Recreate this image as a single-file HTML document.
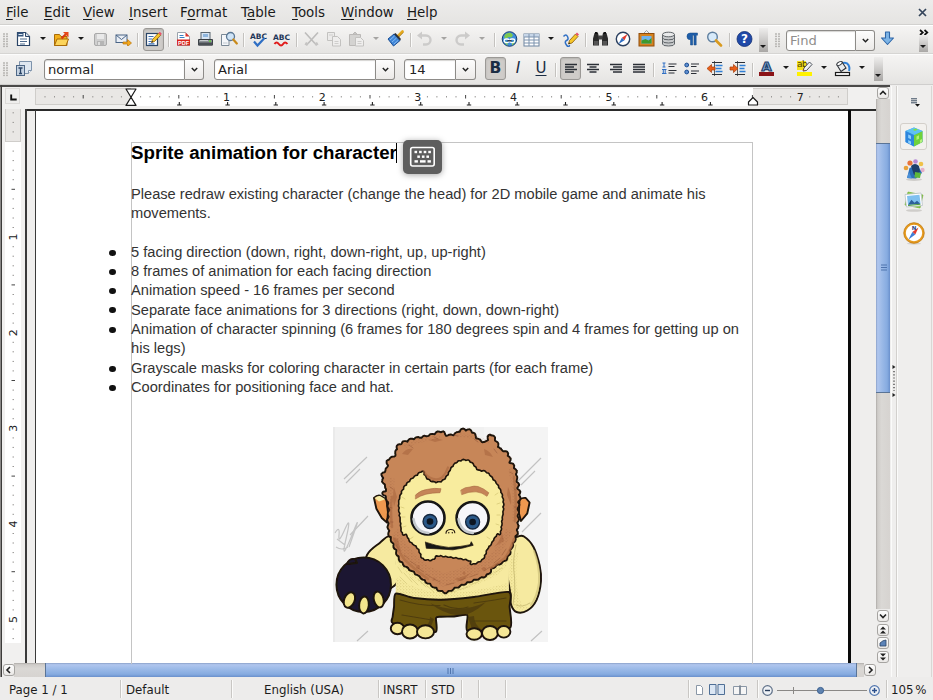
<!DOCTYPE html>
<html><head><meta charset="utf-8"><title>Writer</title>
<style>
html,body{margin:0;padding:0;}
body{width:933px;height:700px;overflow:hidden;background:#edeceb;position:relative;font-family:"DejaVu Sans","Liberation Sans",sans-serif;color:#1a1a1a;}
.abs,.i,.sep,.arr,.grip{position:absolute;}
#menubar{left:0;top:0;width:933px;height:24px;background:linear-gradient(#edeceb,#e5e4e2);border-bottom:1px solid #d2d1cf;box-shadow:0 1px 0 #fff;}
#menubar span{position:absolute;top:4px;font-size:13.4px;line-height:17px;white-space:nowrap;}
#menubar u{text-decoration:underline;text-underline-offset:2px;text-decoration-thickness:1px;}
.doc{font-family:"Liberation Sans",sans-serif;color:#000;}
.line{position:absolute;left:131px;white-space:nowrap;font-size:14.65px;line-height:19px;color:#333;}
.bul{position:absolute;left:109px;width:6.5px;height:6px;border-radius:50%;background:#111;}
.tb{left:0;width:933px;background:linear-gradient(#f5f4f3,#e5e4e2);}
.sep{width:1px;height:14px;background:#c4c2bf;box-shadow:1px 0 0 #fbfbfa;}
.arr{width:0;height:0;border-left:3px solid transparent;border-right:3px solid transparent;border-top:3.500px solid #1a1a1a;}
.arr.g{border-top-color:#a5a4a2;}
.grip{width:6px;height:15px;background-image:radial-gradient(circle at 1px 1px,#b3b1ae 0.6px,transparent 1.1px);background-size:3px 2.5px;}
.combo{position:absolute;height:19px;background:#fff;border:1px solid #8d8b88;border-radius:3px 0 0 3px;box-shadow:inset 0 1px 1px #d5d4d2;font-size:13.1px;color:#222;line-height:19px;padding-left:3px;box-sizing:content-box;}
.cbtn{position:absolute;height:19px;width:19px;border:1px solid #8d8b88;border-left:none;border-radius:0 3px 3px 0;background:linear-gradient(#fdfdfd,#eceae8);}
.cbtn svg{position:absolute;left:5px;top:6px;}
.pressed{position:absolute;background:#cfccc9;border:1px solid #9b9996;border-radius:3px;box-shadow:inset 0 1px 2px #b5b3b0;}
.ovf{position:absolute;background:linear-gradient(#eeedec,#a9a7a5);}
.sbtn{position:absolute;width:11px;height:11px;border:1px solid #a6a4a1;border-radius:3px;background:linear-gradient(#fdfdfd,#eae8e6);box-sizing:border-box;}
.sbtn svg{position:absolute;left:0;top:0;}
.st{position:absolute;top:4px;font-size:11.8px;line-height:17px;white-space:nowrap;color:#1c1c1c;}
.ssep{position:absolute;top:2px;width:1px;height:18px;background:#c9c7c4;box-shadow:1px 0 0 #fbfbfa;}
</style></head><body>
<!-- MENU -->
<div id="menubar" class="abs">
<span style="left:6px"><u>F</u>ile</span>
<span style="left:44px"><u>E</u>dit</span>
<span style="left:83px"><u>V</u>iew</span>
<span style="left:129px"><u>I</u>nsert</span>
<span style="left:180px">F<u>o</u>rmat</span>
<span style="left:241px">T<u>a</u>ble</span>
<span style="left:292px"><u>T</u>ools</span>
<span style="left:341px"><u>W</u>indow</span>
<span style="left:407px"><u>H</u>elp</span>
<svg class="abs" style="left:917px;top:7px" width="11" height="11" viewBox="0 0 11 11"><path d="M2 2 L9 9 M9 2 L2 9" stroke="#34445a" stroke-width="1.7" fill="none"/></svg>
</div>
<!-- TOOLBAR 1 -->
<div id="tb1" class="abs tb" style="top:26px;height:27px;border-bottom:1px solid #d6d5d3;box-shadow:0 1px 0 #fcfcfc;">
<div class="grip" style="left:3px;top:7px"></div>
<!-- new -->
<svg class="i" style="left:16px;top:5px" width="15" height="16" viewBox="0 0 15 16"><path d="M1.5 1.5h8l4 4v9h-12z" fill="#fff" stroke="#2b4567" stroke-width="1.2"/><path d="M1.5 1.5h6v4h-6z" fill="#35557d"/><path d="M9.5 1.5v4h4" fill="#d8e2ee" stroke="#2b4567" stroke-width="1"/><path d="M4 8h7M4 10.5h7M4 13h5" stroke="#4d6a8c" stroke-width="1.2"/><path d="M2.5 3.5h4" stroke="#dfe8f2" stroke-width="1"/></svg>
<div class="arr" style="left:40px;top:11px"></div>
<!-- open -->
<svg class="i" style="left:53px;top:5px" width="17" height="16" viewBox="0 0 17 16"><path d="M1.5 3.5h5l1.5 2h6v9h-12.500z" fill="#f3b01b" stroke="#a96b07" stroke-width="1"/><path d="M1.5 14.500l2.500-6.500h11.500l-2.500 6.500z" fill="#fcd45a" stroke="#a96b07" stroke-width="1"/><path d="M8.500 7.500l5-5" stroke="#d83a10" stroke-width="2.200"/><path d="M10 1h5.500v5.500z" fill="#e8481a"/></svg>
<div class="arr" style="left:78px;top:11px"></div>
<!-- save disabled -->
<svg class="i" style="left:93px;top:6px" width="15" height="15" viewBox="0 0 15 15"><rect x="1.500" y="1.500" width="12" height="12" rx="1.500" fill="#cfcfcf" stroke="#a9a9a9"/><rect x="4" y="2" width="7" height="5" fill="#e9e9e9"/><rect x="4" y="9" width="7" height="4.500" fill="#b5b5b5"/><rect x="5" y="10" width="2" height="3" fill="#dedede"/></svg>
<!-- mail -->
<svg class="i" style="left:115px;top:8px" width="17" height="12" viewBox="0 0 17 12"><rect x="1" y="1" width="11" height="7.500" fill="#e9eef5" stroke="#4a6486" stroke-width="1"/><path d="M1 1l5.500 4.500 5.500-4.500" fill="none" stroke="#4a6486" stroke-width="1"/><path d="M8 8h4.500v-2.500l4 3.500-4 3.500v-2.500h-4.500z" fill="#f5a81c" stroke="#b8720a" stroke-width=".7"/></svg>
<div class="sep" style="left:137px;top:7px"></div>
<!-- edit mode pressed -->
<div class="pressed" style="left:143px;top:2px;width:19px;height:21px;"></div>
<svg class="i" style="left:145px;top:5px" width="17" height="16" viewBox="0 0 17 16"><rect x="1.500" y="2.500" width="11" height="12" fill="#fff" stroke="#2b4567" stroke-width="1.200"/><path d="M3.500 5.500h5M3.500 8h4M3.500 10.500h3M3.500 12.800h6" stroke="#3a6fb5" stroke-width="1.200"/><path d="M6.500 11.500l1-3 6-6.500 2.200 2.200-6.200 6.300z" fill="#f6c62a" stroke="#8a5a0a" stroke-width=".8"/><path d="M13.500 2l1.300-1.200 2 2-1.100 1.400z" fill="#e9506a"/><path d="M6.500 11.500l.5-1.700 1.200 1.200z" fill="#222"/></svg>
<div class="sep" style="left:168px;top:7px"></div>
<!-- pdf -->
<svg class="i" style="left:176px;top:5px" width="15" height="16" viewBox="0 0 15 16"><path d="M1.500 1.500h8l4 4v9h-12z" fill="#fff" stroke="#9aa3ad" stroke-width="1"/><path d="M9.500 1.500v4h4z" fill="#e3332a"/><path d="M3.500 4.500h4M3.500 6.500h5" stroke="#3a7fc5" stroke-width="1.200"/><rect x="1" y="8.500" width="13" height="6" fill="#d9231c"/><text x="7.500" y="13.600" font-family="Liberation Sans,sans-serif" font-weight="bold" font-size="5.500" fill="#fff" text-anchor="middle">PDF</text></svg>
<!-- printer -->
<svg class="i" style="left:197px;top:5px" width="17" height="16" viewBox="0 0 17 16"><rect x="4" y="1.500" width="9" height="7" fill="#d7e5f4" stroke="#5b6770" stroke-width="1"/><rect x="6" y="3" width="5" height="3" fill="#8fb6de"/><path d="M1.500 8.500h14v5.500h-14z" fill="#8c9196" stroke="#3a3f44" stroke-width="1"/><rect x="1.500" y="11.500" width="14" height="3" fill="#4a4f54"/><rect x="12" y="9.500" width="2" height="1.500" fill="#5fd33a"/><path d="M3 9.500h8" stroke="#c7cbce" stroke-width="1"/></svg>
<!-- preview -->
<svg class="i" style="left:220px;top:5px" width="18" height="16" viewBox="0 0 18 16"><path d="M1.500 3.500h7.500v11h-7.500z" fill="#f4f6f9" stroke="#7a8896" stroke-width="1"/><path d="M3 12h4.500" stroke="#c0c8d0"/><circle cx="10.500" cy="5.500" r="4" fill="#cfe4f7" stroke="#5b7794" stroke-width="1.300"/><path d="M13.300 8.500l3.500 4" stroke="#c98a1a" stroke-width="2.200" stroke-linecap="round"/></svg>
<div class="sep" style="left:243px;top:7px"></div>
<!-- spellcheck -->
<svg class="i" style="left:249px;top:5px" width="19" height="17" viewBox="0 0 19 17"><text x="9.500" y="7.500" font-family="DejaVu Sans,sans-serif" font-weight="bold" font-size="7.500" fill="#1d3557" text-anchor="middle">ABC</text><path d="M5 10.500l3.500 4 7-7.500" fill="none" stroke="#2f6fc4" stroke-width="2.200"/></svg>
<!-- autospell -->
<svg class="i" style="left:272px;top:6px" width="19" height="16" viewBox="0 0 19 16"><text x="9.500" y="8" font-family="DejaVu Sans,sans-serif" font-weight="bold" font-size="7.500" fill="#1d3557" text-anchor="middle">ABC</text><path d="M2.500 12q2-3 4.300 0t4.300 0 4.300 0" fill="none" stroke="#e01b1b" stroke-width="2"/></svg>
<div class="sep" style="left:296px;top:7px"></div>
<!-- cut disabled -->
<svg class="i" style="left:303px;top:5px" width="17" height="16" viewBox="0 0 17 16"><path d="M2 1.500l10 11M15 1.500l-10 11" stroke="#bdbcbb" stroke-width="1.600" fill="none"/><path d="M3 11l3 1.500-2 2.500-2.500-1.500zM14 11l-3 1.500 2 2.500 2.500-1.500z" fill="#c4c3c2"/></svg>
<!-- copy disabled -->
<svg class="i" style="left:326px;top:5px" width="16" height="16" viewBox="0 0 16 16"><path d="M1.500 1.500h7v8h-7z" fill="#eceBea" stroke="#c3c2c0"/><path d="M6.500 5.500h5l3 3v6.500h-8z" fill="#efeeed" stroke="#c3c2c0"/><path d="M8.500 10.500h4M8.500 12.500h4M3 4h4" stroke="#cfcecc"/></svg>
<!-- paste disabled -->
<svg class="i" style="left:348px;top:5px" width="17" height="16" viewBox="0 0 17 16"><path d="M1.500 3.500h11v11h-11z" fill="#d4d3d1" stroke="#bbb9b7"/><path d="M4.500 3.500l2.500-2.500 2.500 2.500z" fill="#c6c5c3" stroke="#bbb9b7"/><path d="M7.500 6.500h5l3 3v5.500h-8z" fill="#efeeed" stroke="#c3c2c0"/><path d="M9.500 10.500h4M9.500 12.500h4" stroke="#cfcecc"/></svg>
<div class="arr g" style="left:373px;top:11px"></div>
<!-- paintbrush -->
<svg class="i" style="left:386px;top:4px" width="18" height="18" viewBox="0 0 18 18"><path d="M11.500 6.500l5-5" stroke="#e4a91f" stroke-width="2.600" stroke-linecap="round"/><path d="M11.500 6.500l5-5" stroke="#8a5c08" stroke-width=".6" transform="translate(.9 .9)"/><path d="M2 9l6-5 6 6.500-6.500 5.500z" fill="#3f86d8" stroke="#1c4f94" stroke-width="1"/><path d="M8 4l1.500-1 5.500 6-1 1.500z" fill="#2a2f38"/><path d="M4 10l4.500-4M6 12l4.500-4M8 14l4-3.500" stroke="#8fc0f2" stroke-width=".9"/></svg>
<div class="sep" style="left:410px;top:7px"></div>
<!-- undo disabled -->
<svg class="i" style="left:416px;top:5px" width="17" height="16" viewBox="0 0 17 16"><path d="M5 4.500h5a4.500 4.500 0 0 1 0 9h-3" fill="none" stroke="#cccbca" stroke-width="2.400"/><path d="M1 4.500l5-4v8z" fill="#cccbca"/></svg>
<div class="arr g" style="left:441px;top:11px"></div>
<!-- redo disabled -->
<svg class="i" style="left:454px;top:5px" width="17" height="16" viewBox="0 0 17 16"><path d="M12 4.500h-5a4.500 4.500 0 0 0 0 9h3" fill="none" stroke="#cccbca" stroke-width="2.400"/><path d="M16 4.500l-5-4v8z" fill="#cccbca"/></svg>
<div class="arr g" style="left:479px;top:11px"></div>
<div class="sep" style="left:494px;top:7px"></div>
<!-- hyperlink -->
<svg class="i" style="left:501px;top:5px" width="17" height="16" viewBox="0 0 17 16"><circle cx="8.500" cy="8" r="7.300" fill="#3f8edb" stroke="#1b3f73" stroke-width="1"/><path d="M4 3.500q3-2.500 6-1.500l2 2-1.500 2.500-3-.5-2 1.500-2.500-1z" fill="#7ec850"/><path d="M3 10l3 1 1 3.500q-3-1-4-4.500zM11 11l3.500-1.500q-.5 3-3.500 5z" fill="#7ec850"/><rect x="3.200" y="8" width="5" height="3.600" rx="1.800" fill="none" stroke="#fff" stroke-width="1.300"/><rect x="8.800" y="8" width="5" height="3.600" rx="1.800" fill="none" stroke="#fff" stroke-width="1.300"/><path d="M6.500 9.800h4" stroke="#222" stroke-width="1.300"/></svg>
<!-- table -->
<svg class="i" style="left:523px;top:7px" width="17" height="14" viewBox="0 0 17 14"><rect x="1" y="1" width="15" height="12" fill="#fff" stroke="#6d84a0" stroke-width="1"/><rect x="1" y="1" width="15" height="3" fill="#c7d6e8"/><path d="M1 4h15M1 7h15M1 10h15M6 1v12M11 1v12" stroke="#7d93ae" stroke-width="1"/></svg>
<div class="arr" style="left:548px;top:11px"></div>
<!-- draw -->
<svg class="i" style="left:562px;top:5px" width="17" height="16" viewBox="0 0 17 16"><path d="M1.500 5.500q2.500-3 4 0t-1 4 0 4.500 3 0" fill="none" stroke="#2f6fc4" stroke-width="1.500"/><path d="M6.500 13l1-3.500 6-6.500 2.500 2.500-6 6.500z" fill="#f6c62a" stroke="#8a5a0a" stroke-width=".8"/><path d="M13.500 3l1.500-1.500 2 2-1.300 1.600z" fill="#e9506a"/><path d="M6.500 13l.5-1.800 1.300 1.300z" fill="#222"/></svg>
<div class="sep" style="left:585px;top:7px"></div>
<!-- binoculars -->
<svg class="i" style="left:592px;top:5px" width="17" height="16" viewBox="0 0 17 16"><path d="M2.500 2h3.500l1 4v8.500h-6v-7z" fill="#2b2b2b"/><path d="M14.500 2h-3.500l-1 4v8.500h6v-7z" fill="#2b2b2b"/><rect x="6.500" y="4.500" width="4" height="4" fill="#444"/><rect x="2" y="10" width="4.500" height="4" fill="#555"/><rect x="10.500" y="10" width="4.500" height="4" fill="#555"/><rect x="3" y="1" width="2.500" height="2" fill="#111"/><rect x="11.500" y="1" width="2.500" height="2" fill="#111"/></svg>
<!-- navigator -->
<svg class="i" style="left:615px;top:5px" width="16" height="16" viewBox="0 0 16 16"><circle cx="8" cy="8" r="6.700" fill="#fff" stroke="#2a3f5f" stroke-width="1.400"/><path d="M12.500 3l-3 6.200-2.600-2.400z" fill="#e23b2e"/><path d="M3.500 13l3.400-6.200 2.600 2.400z" fill="#2f6fc4"/></svg>
<!-- gallery -->
<svg class="i" style="left:638px;top:4px" width="17" height="17" viewBox="0 0 17 17"><path d="M6 3l2.500-2.500 2.500 2.500" fill="none" stroke="#8a8a8a" stroke-width=".8"/><rect x="1" y="3.500" width="15" height="12.500" fill="#d5821e" stroke="#8f4d0c" stroke-width="1"/><rect x="3.500" y="6" width="10" height="7.500" fill="#6fb3ec"/><path d="M3.500 13.500v-3l4-1.500 3 1.500 3-2.500v5.500z" fill="#3d9a2e"/></svg>
<!-- database -->
<svg class="i" style="left:661px;top:5px" width="15" height="16" viewBox="0 0 15 16"><path d="M1.500 3.500v9.500q0 2 6 2t6-2v-9.500" fill="#c9cbcd" stroke="#5f6468" stroke-width="1"/><ellipse cx="7.500" cy="3.500" rx="6" ry="2.300" fill="#e9eaeb" stroke="#5f6468"/><path d="M1.500 6.800q0 2 6 2t6-2M1.500 10q0 2 6 2t6-2" fill="none" stroke="#5f6468"/></svg>
<!-- pilcrow -->
<svg class="i" style="left:685px;top:6px" width="14" height="14" viewBox="0 0 14 14"><path d="M5.200 1h7.300v2.200h-1.300v9.800h-2.200v-9.800h-1.300v9.800h-2.200v-5.200a3.400 3.400 0 0 1-0.300-6.800z" fill="#1f5ea9" stroke="#174a86" stroke-width=".5"/></svg>
<!-- zoom -->
<svg class="i" style="left:706px;top:5px" width="17" height="16" viewBox="0 0 17 16"><circle cx="6.500" cy="6" r="4.800" fill="#d7eafa" stroke="#5f7f9f" stroke-width="1.400"/><path d="M10 9.500l5 5" stroke="#d99a1f" stroke-width="2.600" stroke-linecap="round"/></svg>
<div class="sep" style="left:729px;top:7px"></div>
<!-- help -->
<svg class="i" style="left:736px;top:5px" width="17" height="16" viewBox="0 0 17 16"><circle cx="8.500" cy="8" r="7.500" fill="#1f49a8" stroke="#132f73" stroke-width=".8"/><text x="8.500" y="12.300" font-family="DejaVu Sans,sans-serif" font-weight="bold" font-size="12" fill="#fff" text-anchor="middle">?</text></svg>
<div class="ovf" style="left:759px;top:2px;width:9px;height:24px;"></div>
<div class="arr" style="left:760px;top:19px;border-width:3.500px 3px 0 3px"></div>
<!-- find toolbar -->
<div class="grip" style="left:775px;top:7px"></div>
<div class="combo" style="left:786px;top:4px;width:65px;color:#8f8e8c;">Find</div>
<div class="cbtn" style="left:856px;top:4px;width:18px;"><svg width="9" height="7" viewBox="0 0 9 7"><path d="M1.800 2l2.700 2.700 2.700-2.700" fill="none" stroke="#222" stroke-width="1.500"/></svg></div>
<svg class="i" style="left:880px;top:5px" width="15" height="15" viewBox="0 0 15 15"><path d="M5.500 1h4v6h4l-6 6.500-6-6.500h4z" fill="#7db4e6" stroke="#2f67a8" stroke-width="1.100" stroke-linejoin="round"/></svg>
<svg class="i" style="left:919px;top:3px" width="10" height="7" viewBox="0 0 10 7"><path d="M1 1l2.800 2.500-2.800 2.500M5.500 1l2.800 2.500-2.800 2.500" fill="none" stroke="#111" stroke-width="1.700"/></svg>
<div class="ovf" style="left:919px;top:9px;width:9px;height:17px;"></div>
<div class="arr" style="left:920px;top:19px;border-width:3.500px 3px 0 3px"></div>
</div>
<!-- TOOLBAR 2 -->
<div id="tb2" class="abs tb" style="top:55px;height:29px;border-bottom:1px solid #cfcecd;">
<div class="grip" style="left:3px;top:7px"></div>
<!-- styles -->
<svg class="i" style="left:15px;top:5px" width="18" height="17" viewBox="0 0 18 17"><path d="M4.500 1.500h12v9l-3 3h-9z" fill="#dfe7f0" stroke="#7e93ab" stroke-width="1"/><path d="M16.500 10.500h-3v3" fill="#fff" stroke="#7e93ab"/><rect x="1.500" y="5.500" width="8" height="10" fill="#c6d3e2" stroke="#4e6786" stroke-width="1"/><path d="M3.500 8h4M5.500 8v5.500M4 13.500h3" stroke="#2b4567" stroke-width="1.300"/></svg>
<div class="combo" style="left:44px;top:4px;width:136px;">normal</div>
<div class="cbtn" style="left:185px;top:4px;width:18px;"><svg width="9" height="7" viewBox="0 0 9 7"><path d="M1.800 2l2.700 2.700 2.700-2.700" fill="none" stroke="#222" stroke-width="1.500"/></svg></div>
<div class="combo" style="left:214px;top:4px;width:157px;">Arial</div>
<div class="cbtn" style="left:376px;top:4px;width:18px;"><svg width="9" height="7" viewBox="0 0 9 7"><path d="M1.800 2l2.700 2.700 2.700-2.700" fill="none" stroke="#222" stroke-width="1.500"/></svg></div>
<div class="combo" style="left:404px;top:4px;width:46px;padding-left:4px;">14</div>
<div class="cbtn" style="left:456px;top:4px;"><svg width="9" height="7" viewBox="0 0 9 7"><path d="M1.800 2l2.700 2.700 2.700-2.700" fill="none" stroke="#222" stroke-width="1.500"/></svg></div>
<!-- B I U -->
<div class="pressed" style="left:485px;top:2px;width:19px;height:21px;"></div>
<div class="abs" style="left:485px;top:3px;width:21px;text-align:center;font:bold 15.500px/20px 'DejaVu Sans',sans-serif;color:#1b2d44;">B</div>
<div class="abs" style="left:509px;top:3px;width:18px;text-align:center;font:italic 15.500px/20px 'DejaVu Sans',sans-serif;color:#1b2d44;">I</div>
<div class="abs" style="left:532px;top:3px;width:18px;text-align:center;font:15px/20px 'DejaVu Sans',sans-serif;color:#1b2d44;text-decoration:underline;text-underline-offset:2px;">U</div>
<div class="sep" style="left:555px;top:8px"></div>
<div class="pressed" style="left:560px;top:2px;width:19px;height:21px;"></div>
<svg class="i" style="left:565px;top:8px" width="12" height="11" viewBox="0 0 12 11"><path d="M0 1.500h12M0 4h9M0 6.500h12M0 9h9" stroke="#2b2f36" stroke-width="1.500"/></svg>
<svg class="i" style="left:587px;top:8px" width="12" height="11" viewBox="0 0 12 11"><path d="M0 1.500h12M2.500 4h7M0 6.500h12M2.500 9h7" stroke="#2b2f36" stroke-width="1.500"/></svg>
<svg class="i" style="left:610px;top:8px" width="12" height="11" viewBox="0 0 12 11"><path d="M0 1.500h12M3 4h9M0 6.500h12M3 9h9" stroke="#2b2f36" stroke-width="1.500"/></svg>
<svg class="i" style="left:633px;top:8px" width="12" height="11" viewBox="0 0 12 11"><path d="M0 1.500h12M0 4h12M0 6.500h12M0 9h12" stroke="#2b2f36" stroke-width="1.500"/></svg>
<div class="sep" style="left:653px;top:8px"></div>
<!-- numbering -->
<svg class="i" style="left:661px;top:7px" width="16" height="13" viewBox="0 0 16 13"><path d="M1.500 1h3M3 1v4M1.500 5h3M1 7.500h4.500M2.300 7.500v4M4.200 7.500v4M1 11.500h4.500" stroke="#2f6fc4" stroke-width="1"/><path d="M7.500 2h8M7.500 4.500h6M7.500 8.500h8M7.500 11h6" stroke="#2b2f36" stroke-width="1.200"/></svg>
<!-- bullets -->
<svg class="i" style="left:684px;top:7px" width="15" height="13" viewBox="0 0 15 13"><circle cx="2.700" cy="3" r="1.900" fill="#5f8fd0" stroke="#1d4f94" stroke-width="1"/><circle cx="2.700" cy="10" r="1.900" fill="#5f8fd0" stroke="#1d4f94" stroke-width="1"/><path d="M7 2h8M7 4.500h5.500M7 9h8M7 11.500h5.500" stroke="#2b2f36" stroke-width="1.200"/></svg>
<!-- outdent -->
<svg class="i" style="left:706px;top:5px" width="17" height="17" viewBox="0 0 17 17"><path d="M8.500 1v15" stroke="#3a3a3a" stroke-width=".8"/><path d="M6 2.500h10M6 14.500h10" stroke="#2b2f36" stroke-width="1"/><path d="M9.500 5.500h7M9.500 8.500h6M9.500 11.500h7" stroke="#2f7fd6" stroke-width="1.500"/><path d="M1 8.500l4.500-4v2.500h3.500v3h-3.500v2.500z" fill="#e9601a" stroke="#a83c08" stroke-width=".7"/></svg>
<!-- indent -->
<svg class="i" style="left:729px;top:5px" width="17" height="17" viewBox="0 0 17 17"><path d="M8.500 1v15" stroke="#3a3a3a" stroke-width=".8"/><path d="M6 2.500h10M6 14.500h10" stroke="#2b2f36" stroke-width="1"/><path d="M10.500 5.500h6M10.500 8.500h5M10.500 11.500h6" stroke="#2f7fd6" stroke-width="1.500"/><path d="M9 8.500l-4.500-4v2.500h-3.500v3h3.500v2.500z" fill="#e9601a" stroke="#a83c08" stroke-width=".7"/></svg>
<div class="sep" style="left:752px;top:8px"></div>
<!-- font color -->
<div class="abs" style="left:758px;top:4px;width:17px;text-align:center;font:bold 13px/15px 'DejaVu Sans',sans-serif;color:#8fb0d6;-webkit-text-stroke:1.200px #1f4470;">A</div>
<div class="abs" style="left:759px;top:17px;width:15px;height:4px;background:#8b1418;"></div>
<div class="arr" style="left:783px;top:11px"></div>
<!-- highlight -->
<div class="abs" style="left:797px;top:6px;width:9px;height:9px;background:#f2e11c;"></div>
<div class="abs" style="left:797px;top:17px;width:15px;height:4px;background:#fff200;"></div>
<div class="abs" style="left:797px;top:4px;font:9px/11px 'DejaVu Sans',sans-serif;color:#4a3b00;letter-spacing:-.5px;">ab</div>
<svg class="i" style="left:801px;top:5px" width="12" height="12" viewBox="0 0 12 12"><path d="M2 11l1-3 5.500-6 2.500 2.500-5.500 6z" fill="#eef0f2" stroke="#3a3f48" stroke-width=".9"/><path d="M2 11l.6-1.800 1.300 1.300z" fill="#d8421a"/></svg>
<div class="arr" style="left:821px;top:11px"></div>
<!-- background bucket -->
<svg class="i" style="left:834px;top:5px" width="17" height="17" viewBox="0 0 17 17"><path d="M9 3q4-1 5.500 2t.5 6" fill="none" stroke="#2f7fd6" stroke-width="2"/><path d="M3 5l5-3 4 6-5 3.500z" fill="#e9ecef" stroke="#2b2f36" stroke-width="1.100"/><ellipse cx="5.500" cy="3.500" rx="3" ry="1.500" transform="rotate(-30 5.500 3.500)" fill="#fff" stroke="#2b2f36" stroke-width=".9"/><rect x="1.500" y="12.500" width="14" height="3" fill="#fff" stroke="#1a1a1a" stroke-width="1.200"/></svg>
<div class="arr" style="left:859px;top:11px"></div>
<div class="ovf" style="left:874px;top:2px;width:9px;height:24px;"></div>
<div class="arr" style="left:875px;top:19px;border-width:3.500px 3px 0 3px"></div>
</div>
<!-- FRAME -->
<div class="abs" style="left:0;top:85px;width:891px;height:2px;background:#4a4948;"></div>
<div class="abs" style="left:1px;top:85px;width:1px;height:592px;background:#3c3b3a;"></div>
<div class="abs" style="left:0px;top:87px;width:1px;height:590px;background:#8a8886;"></div>
<div id="hruler" class="abs" style="left:2px;top:87px;width:875px;height:22px;background:#f1f0ef;overflow:hidden;">
<div class="abs" style="left:3px;top:1px;width:15px;height:16px;background:#efeeed;border:1px solid #dcdad8;box-sizing:border-box;"></div>
<svg class="abs" style="left:8px;top:7px" width="8" height="8" viewBox="0 0 8 8"><path d="M1.200 0.500v5h5.500" fill="none" stroke="#111" stroke-width="1.900"/></svg>
<div class="abs" style="left:129px;top:1px;width:622px;height:18px;background:#ffffff;"></div>
<div class="abs" style="left:33px;top:1px;width:96px;height:17px;background:#e9e7e5;border:1px solid #cfcdca;border-right:none;box-sizing:border-box;"></div>
<div class="abs" style="left:751px;top:1px;width:95px;height:17px;background:#e9e7e5;border:1px solid #cfcdca;border-left:none;box-sizing:border-box;"></div>
<svg class="abs" style="left:0;top:0" width="875" height="22" viewBox="0 0 875 22"><rect x="42.5" y="9" width="1" height="1.500" fill="#9a9896"/><rect x="52.0" y="9" width="1" height="1.500" fill="#9a9896"/><rect x="61.6" y="9" width="1" height="1.500" fill="#9a9896"/><rect x="71.1" y="9" width="1" height="1.500" fill="#9a9896"/><rect x="80.7" y="8" width="1" height="3.500" fill="#444"/><rect x="90.3" y="9" width="1" height="1.500" fill="#9a9896"/><rect x="99.8" y="9" width="1" height="1.500" fill="#9a9896"/><rect x="109.4" y="9" width="1" height="1.500" fill="#9a9896"/><rect x="118.9" y="9" width="1" height="1.500" fill="#9a9896"/><rect x="138.1" y="9" width="1" height="1.500" fill="#9a9896"/><rect x="147.6" y="9" width="1" height="1.500" fill="#9a9896"/><rect x="157.2" y="9" width="1" height="1.500" fill="#9a9896"/><rect x="166.7" y="9" width="1" height="1.500" fill="#9a9896"/><rect x="176.3" y="8" width="1" height="3.500" fill="#444"/><rect x="185.9" y="9" width="1" height="1.500" fill="#9a9896"/><rect x="195.4" y="9" width="1" height="1.500" fill="#9a9896"/><rect x="205.0" y="9" width="1" height="1.500" fill="#9a9896"/><rect x="214.5" y="9" width="1" height="1.500" fill="#9a9896"/><rect x="233.7" y="9" width="1" height="1.500" fill="#9a9896"/><rect x="243.2" y="9" width="1" height="1.500" fill="#9a9896"/><rect x="252.8" y="9" width="1" height="1.500" fill="#9a9896"/><rect x="262.3" y="9" width="1" height="1.500" fill="#9a9896"/><rect x="271.9" y="8" width="1" height="3.500" fill="#444"/><rect x="281.5" y="9" width="1" height="1.500" fill="#9a9896"/><rect x="291.0" y="9" width="1" height="1.500" fill="#9a9896"/><rect x="300.6" y="9" width="1" height="1.500" fill="#9a9896"/><rect x="310.1" y="9" width="1" height="1.500" fill="#9a9896"/><rect x="329.3" y="9" width="1" height="1.500" fill="#9a9896"/><rect x="338.8" y="9" width="1" height="1.500" fill="#9a9896"/><rect x="348.4" y="9" width="1" height="1.500" fill="#9a9896"/><rect x="357.9" y="9" width="1" height="1.500" fill="#9a9896"/><rect x="367.5" y="8" width="1" height="3.500" fill="#444"/><rect x="377.1" y="9" width="1" height="1.500" fill="#9a9896"/><rect x="386.6" y="9" width="1" height="1.500" fill="#9a9896"/><rect x="396.2" y="9" width="1" height="1.500" fill="#9a9896"/><rect x="405.7" y="9" width="1" height="1.500" fill="#9a9896"/><rect x="424.9" y="9" width="1" height="1.500" fill="#9a9896"/><rect x="434.4" y="9" width="1" height="1.500" fill="#9a9896"/><rect x="444.0" y="9" width="1" height="1.500" fill="#9a9896"/><rect x="453.5" y="9" width="1" height="1.500" fill="#9a9896"/><rect x="463.1" y="8" width="1" height="3.500" fill="#444"/><rect x="472.7" y="9" width="1" height="1.500" fill="#9a9896"/><rect x="482.2" y="9" width="1" height="1.500" fill="#9a9896"/><rect x="491.8" y="9" width="1" height="1.500" fill="#9a9896"/><rect x="501.3" y="9" width="1" height="1.500" fill="#9a9896"/><rect x="520.5" y="9" width="1" height="1.500" fill="#9a9896"/><rect x="530.0" y="9" width="1" height="1.500" fill="#9a9896"/><rect x="539.6" y="9" width="1" height="1.500" fill="#9a9896"/><rect x="549.1" y="9" width="1" height="1.500" fill="#9a9896"/><rect x="558.7" y="8" width="1" height="3.500" fill="#444"/><rect x="568.3" y="9" width="1" height="1.500" fill="#9a9896"/><rect x="577.8" y="9" width="1" height="1.500" fill="#9a9896"/><rect x="587.4" y="9" width="1" height="1.500" fill="#9a9896"/><rect x="596.9" y="9" width="1" height="1.500" fill="#9a9896"/><rect x="616.1" y="9" width="1" height="1.500" fill="#9a9896"/><rect x="625.6" y="9" width="1" height="1.500" fill="#9a9896"/><rect x="635.2" y="9" width="1" height="1.500" fill="#9a9896"/><rect x="644.7" y="9" width="1" height="1.500" fill="#9a9896"/><rect x="654.3" y="8" width="1" height="3.500" fill="#444"/><rect x="663.9" y="9" width="1" height="1.500" fill="#9a9896"/><rect x="673.4" y="9" width="1" height="1.500" fill="#9a9896"/><rect x="683.0" y="9" width="1" height="1.500" fill="#9a9896"/><rect x="692.5" y="9" width="1" height="1.500" fill="#9a9896"/><rect x="711.7" y="9" width="1" height="1.500" fill="#9a9896"/><rect x="721.2" y="9" width="1" height="1.500" fill="#9a9896"/><rect x="730.8" y="9" width="1" height="1.500" fill="#9a9896"/><rect x="740.3" y="9" width="1" height="1.500" fill="#9a9896"/><rect x="749.9" y="8" width="1" height="3.500" fill="#444"/><rect x="759.5" y="9" width="1" height="1.500" fill="#9a9896"/><rect x="769.0" y="9" width="1" height="1.500" fill="#9a9896"/><rect x="778.6" y="9" width="1" height="1.500" fill="#9a9896"/><rect x="788.1" y="9" width="1" height="1.500" fill="#9a9896"/><rect x="807.3" y="9" width="1" height="1.500" fill="#9a9896"/><rect x="816.8" y="9" width="1" height="1.500" fill="#9a9896"/><rect x="826.4" y="9" width="1" height="1.500" fill="#9a9896"/><rect x="835.9" y="9" width="1" height="1.500" fill="#9a9896"/><text x="224.6" y="13.800" font-family="DejaVu Sans,sans-serif" font-size="11" fill="#222" text-anchor="middle">1</text><text x="320.2" y="13.800" font-family="DejaVu Sans,sans-serif" font-size="11" fill="#222" text-anchor="middle">2</text><text x="415.8" y="13.800" font-family="DejaVu Sans,sans-serif" font-size="11" fill="#222" text-anchor="middle">3</text><text x="511.4" y="13.800" font-family="DejaVu Sans,sans-serif" font-size="11" fill="#222" text-anchor="middle">4</text><text x="607.0" y="13.800" font-family="DejaVu Sans,sans-serif" font-size="11" fill="#222" text-anchor="middle">5</text><text x="702.6" y="13.800" font-family="DejaVu Sans,sans-serif" font-size="11" fill="#222" text-anchor="middle">6</text><text x="798.2" y="13.800" font-family="DejaVu Sans,sans-serif" font-size="11" fill="#222" text-anchor="middle">7</text><path d="M177.3 15v3M175.1 18h4.400" stroke="#222" stroke-width="1.100" fill="none"/><path d="M225.6 15v3M223.4 18h4.400" stroke="#222" stroke-width="1.100" fill="none"/><path d="M273.8 15v3M271.6 18h4.400" stroke="#222" stroke-width="1.100" fill="none"/><path d="M322.1 15v3M319.9 18h4.400" stroke="#222" stroke-width="1.100" fill="none"/><path d="M370.4 15v3M368.2 18h4.400" stroke="#222" stroke-width="1.100" fill="none"/><path d="M418.7 15v3M416.5 18h4.400" stroke="#222" stroke-width="1.100" fill="none"/><path d="M467.0 15v3M464.8 18h4.400" stroke="#222" stroke-width="1.100" fill="none"/><path d="M515.2 15v3M513.0 18h4.400" stroke="#222" stroke-width="1.100" fill="none"/><path d="M563.5 15v3M561.3 18h4.400" stroke="#222" stroke-width="1.100" fill="none"/><path d="M611.8 15v3M609.6 18h4.400" stroke="#222" stroke-width="1.100" fill="none"/><path d="M660.1 15v3M657.9 18h4.400" stroke="#222" stroke-width="1.100" fill="none"/><path d="M708.4 15v3M706.2 18h4.400" stroke="#222" stroke-width="1.100" fill="none"/><path d="M124 2h10l-5 8.200 5 8.200h-10l5-8.200z" fill="#fff" stroke="#1a1a1a" stroke-width="1.200" stroke-linejoin="round"/><path d="M751 10.500l4.500 4.500v3h-9v-3z" fill="#fff" stroke="#1a1a1a" stroke-width="1.200" stroke-linejoin="round"/></svg>
</div>
<div id="vruler" class="abs" style="left:2px;top:109px;width:23px;height:555px;background:#f1f0ef;overflow:hidden;">
<div class="abs" style="left:3px;top:0;width:16px;height:534px;background:#fff;"></div>
<div class="abs" style="left:3px;top:0;width:16px;height:33px;background:#e9e7e5;border:1px solid #cfcdca;border-top:none;box-sizing:border-box;"></div>
<svg class="abs" style="left:0;top:0" width="23" height="555" viewBox="0 0 23 555"><rect x="10.500" y="3.3" width="1.500" height="1" fill="#9a9896"/><rect x="10.500" y="12.9" width="1.500" height="1" fill="#9a9896"/><rect x="10.500" y="22.4" width="1.500" height="1" fill="#9a9896"/><rect x="10.500" y="41.6" width="1.500" height="1" fill="#9a9896"/><rect x="10.500" y="51.1" width="1.500" height="1" fill="#9a9896"/><rect x="10.500" y="60.7" width="1.500" height="1" fill="#9a9896"/><rect x="10.500" y="70.2" width="1.500" height="1" fill="#9a9896"/><rect x="9.500" y="79.8" width="3.500" height="1" fill="#444"/><rect x="10.500" y="89.4" width="1.500" height="1" fill="#9a9896"/><rect x="10.500" y="98.9" width="1.500" height="1" fill="#9a9896"/><rect x="10.500" y="108.5" width="1.500" height="1" fill="#9a9896"/><rect x="10.500" y="118.0" width="1.500" height="1" fill="#9a9896"/><rect x="10.500" y="137.2" width="1.500" height="1" fill="#9a9896"/><rect x="10.500" y="146.7" width="1.500" height="1" fill="#9a9896"/><rect x="10.500" y="156.3" width="1.500" height="1" fill="#9a9896"/><rect x="10.500" y="165.8" width="1.500" height="1" fill="#9a9896"/><rect x="9.500" y="175.4" width="3.500" height="1" fill="#444"/><rect x="10.500" y="185.0" width="1.500" height="1" fill="#9a9896"/><rect x="10.500" y="194.5" width="1.500" height="1" fill="#9a9896"/><rect x="10.500" y="204.1" width="1.500" height="1" fill="#9a9896"/><rect x="10.500" y="213.6" width="1.500" height="1" fill="#9a9896"/><rect x="10.500" y="232.8" width="1.500" height="1" fill="#9a9896"/><rect x="10.500" y="242.3" width="1.500" height="1" fill="#9a9896"/><rect x="10.500" y="251.9" width="1.500" height="1" fill="#9a9896"/><rect x="10.500" y="261.4" width="1.500" height="1" fill="#9a9896"/><rect x="9.500" y="271.0" width="3.500" height="1" fill="#444"/><rect x="10.500" y="280.6" width="1.500" height="1" fill="#9a9896"/><rect x="10.500" y="290.1" width="1.500" height="1" fill="#9a9896"/><rect x="10.500" y="299.7" width="1.500" height="1" fill="#9a9896"/><rect x="10.500" y="309.2" width="1.500" height="1" fill="#9a9896"/><rect x="10.500" y="328.4" width="1.500" height="1" fill="#9a9896"/><rect x="10.500" y="337.9" width="1.500" height="1" fill="#9a9896"/><rect x="10.500" y="347.5" width="1.500" height="1" fill="#9a9896"/><rect x="10.500" y="357.0" width="1.500" height="1" fill="#9a9896"/><rect x="9.500" y="366.6" width="3.500" height="1" fill="#444"/><rect x="10.500" y="376.2" width="1.500" height="1" fill="#9a9896"/><rect x="10.500" y="385.7" width="1.500" height="1" fill="#9a9896"/><rect x="10.500" y="395.3" width="1.500" height="1" fill="#9a9896"/><rect x="10.500" y="404.8" width="1.500" height="1" fill="#9a9896"/><rect x="10.500" y="424.0" width="1.500" height="1" fill="#9a9896"/><rect x="10.500" y="433.5" width="1.500" height="1" fill="#9a9896"/><rect x="10.500" y="443.1" width="1.500" height="1" fill="#9a9896"/><rect x="10.500" y="452.6" width="1.500" height="1" fill="#9a9896"/><rect x="9.500" y="462.2" width="3.500" height="1" fill="#444"/><rect x="10.500" y="471.8" width="1.500" height="1" fill="#9a9896"/><rect x="10.500" y="481.3" width="1.500" height="1" fill="#9a9896"/><rect x="10.500" y="490.9" width="1.500" height="1" fill="#9a9896"/><rect x="10.500" y="500.4" width="1.500" height="1" fill="#9a9896"/><rect x="10.500" y="519.6" width="1.500" height="1" fill="#9a9896"/><rect x="10.500" y="529.1" width="1.500" height="1" fill="#9a9896"/><text transform="translate(15 128.1) rotate(-90)" font-family="DejaVu Sans,sans-serif" font-size="11" fill="#222" text-anchor="middle">1</text><text transform="translate(15 223.7) rotate(-90)" font-family="DejaVu Sans,sans-serif" font-size="11" fill="#222" text-anchor="middle">2</text><text transform="translate(15 319.3) rotate(-90)" font-family="DejaVu Sans,sans-serif" font-size="11" fill="#222" text-anchor="middle">3</text><text transform="translate(15 414.9) rotate(-90)" font-family="DejaVu Sans,sans-serif" font-size="11" fill="#222" text-anchor="middle">4</text><text transform="translate(15 510.5) rotate(-90)" font-family="DejaVu Sans,sans-serif" font-size="11" fill="#222" text-anchor="middle">5</text></svg>
</div>
<div id="docarea" class="abs" style="left:25px;top:109px;width:852px;height:555px;background:#efeeed;overflow:hidden;">
<div class="abs" style="left:0;top:0;width:852px;height:2px;background:#2a2a2a;"></div>
<div class="abs" style="left:0;top:0;width:1.500px;height:555px;background:#3a3a3a;"></div>
<div class="abs" style="left:9.500px;top:1px;width:1.500px;height:555px;background:#3a3a3a;"></div>
<div class="abs" style="left:11px;top:2px;width:812px;height:553px;background:#fff;"></div>
<div class="abs" style="left:823px;top:1px;width:3px;height:555px;background:#0a0a0a;"></div>
</div>
<div id="vscroll" class="abs" style="left:877px;top:87px;width:13px;height:577px;background:#edeceb;">
<div class="abs" style="left:-1px;top:12px;width:14px;height:510px;background:linear-gradient(90deg,#aeaba8,#cfccc9 12%,#dad8d5 40%,#d6d3d0);"></div>
<div class="abs" style="left:-1px;top:56px;width:14px;height:250px;background:linear-gradient(90deg,#8aa0c8,#b0c6ee 12%,#9dbbe8 40%,#86abe0 80%,#6a90cc);border-top:1px solid #5a7496;border-bottom:1px solid #5a7496;box-sizing:border-box;"></div>
<svg class="abs" style="left:4px;top:177px" width="6" height="7" viewBox="0 0 6 7"><path d="M0 1h6M0 3.500h6M0 6h6" stroke="#4f74ad" stroke-width="1"/></svg>
<div class="sbtn" style="left:0px;top:0px;width:12px;height:12px;"><svg width="10" height="10" viewBox="0 0 10 10"><path d="M2 6.500l3-3 3 3" fill="none" stroke="#222" stroke-width="1.600"/></svg></div>
<div class="sbtn" style="left:0px;top:523px;width:12px;height:12px;"><svg width="10" height="10" viewBox="0 0 10 10"><path d="M2 3.500l3 3 3-3" fill="none" stroke="#222" stroke-width="1.600"/></svg></div>
<div class="sbtn" style="left:0px;top:537px;width:12px;height:12px;"><svg width="10" height="10" viewBox="0 0 10 10"><path d="M2 4.500l3-3 3 3zM2 8.500l3-3 3 3z" fill="#222"/></svg></div>
<div class="sbtn" style="left:0px;top:550px;width:12px;height:12px;"><svg width="10" height="10" viewBox="0 0 10 10"><path d="M2 8v-3q3-3 6-3v6z" fill="#5b83b8" stroke="#2b4567" stroke-width=".8"/></svg></div>
<div class="sbtn" style="left:0px;top:564px;width:12px;height:12px;"><svg width="10" height="10" viewBox="0 0 10 10"><path d="M2 1.500l3 3 3-3zM2 5.500l3 3 3-3z" fill="#222"/></svg></div>
</div>
<div id="hscroll" class="abs" style="left:2px;top:664px;width:875px;height:13px;background:#edeceb;">
<div class="abs" style="left:12px;top:-1px;width:850px;height:14px;background:linear-gradient(#aeaba8,#cfccc9 12%,#dad8d5 40%,#d6d3d0);"></div>
<div class="abs" style="left:43px;top:-1px;width:812px;height:14px;background:linear-gradient(#8aa0c8,#b0c6ee 12%,#9dbbe8 40%,#86abe0 80%,#6a90cc);border-left:1px solid #5a7496;border-right:1px solid #5a7496;box-sizing:border-box;"></div>
<svg class="abs" style="left:445px;top:4px" width="7" height="6" viewBox="0 0 7 6"><path d="M1 0v6M3.500 0v6M6 0v6" stroke="#4f74ad" stroke-width="1"/></svg>
<div class="sbtn" style="left:1px;top:0px;width:12px;height:12px;"><svg width="10" height="10" viewBox="0 0 10 10"><path d="M6 2l-3 3 3 3" fill="none" stroke="#222" stroke-width="1.600"/></svg></div>
<div class="sbtn" style="left:862px;top:0px;width:12px;height:12px;"><svg width="10" height="10" viewBox="0 0 10 10"><path d="M4 2l3 3-3 3" fill="none" stroke="#222" stroke-width="1.600"/></svg></div>
</div>
<div id="sidebar" class="abs" style="left:890px;top:85px;width:43px;height:592px;background:#efeeed;">
<div class="abs" style="left:1px;top:1px;width:1px;height:591px;background:#fbfbfa;"></div>
<div class="abs" style="left:6px;top:1px;width:1px;height:591px;background:#d2d0cd;"></div>
<div class="abs" style="left:7px;top:1px;width:1px;height:591px;background:#fbfbfa;"></div>
<div class="abs" style="left:41px;top:1px;width:1px;height:591px;background:#d9d7d4;"></div>
<svg class="abs" style="left:1px;top:279px" width="6" height="34" viewBox="0 0 6 34"><path d="M1.500 1l3 2-3 2zM1.500 29l3 2-3 2z" fill="#222"/><path d="M3 7v20" stroke="#333" stroke-width="1.200" stroke-dasharray="1.200 2"/></svg>
<svg class="abs" style="left:21px;top:13px" width="10" height="10" viewBox="0 0 10 10"><path d="M0 .8h6M0 2.800h6M0 4.800h6" stroke="#3a4a5e" stroke-width="1"/><path d="M4 6h5l-2.500 2.700z" fill="#111"/></svg>
<div class="abs" style="left:10px;top:38px;width:27px;height:27px;border:1px solid #d3cfca;border-radius:3px;background:#f3f1ee;box-sizing:border-box;"></div>
<svg class="abs" style="left:13px;top:41px" width="22" height="22" viewBox="0 0 22 22">
<path d="M11 1.500l8.500 3.500v11l-8.500 4.500-8.500-4.500v-11z" fill="#4aa3ea"/>
<path d="M11 9v11.500l8.500-4.500v-11z" fill="#6fd23a"/>
<path d="M11 1.500l8.500 3.500-8.500 4-8.500-4z" fill="#5fc0f5"/>
<path d="M2.500 5l8.500 4v11.500l-8.500-4.500z" fill="#2d86dd"/>
<path d="M5.200 8.500l2.800 1.300v3.500l-2.800-1.400zM5.200 14l2.800 1.400v3l-2.800-1.500z" fill="#8fd0fa"/>
<path d="M13.500 10.500l2.500-1.300v3.500l-2.500 1.300zM17 14l2-1v3l-2 1.100z" fill="#b6f27a"/>
<path d="M9.500 3.800l3-1.200 2.500 1-3 1.300z" fill="#7fe04a"/>
</svg>
<svg class="abs" style="left:12px;top:73px" width="24" height="24" viewBox="0 0 24 24">
<ellipse cx="12" cy="21.500" rx="8" ry="1.500" fill="#cfcdca"/>
<circle cx="8" cy="5" r="2.600" fill="#e8743a"/><circle cx="13.500" cy="3.500" r="2.300" fill="#b78ad8"/><circle cx="19" cy="6" r="2.300" fill="#f0c24a"/><circle cx="20.500" cy="12" r="2.200" fill="#e6b0c8"/><circle cx="4" cy="10" r="2.300" fill="#e8a23a"/>
<path d="M5 20l2.500-10 8-3 4.500 8-6 5.500z" fill="#2d6fb8"/>
<path d="M9 8q4-4 8 0l1 6-6 3z" fill="#1f3f6a"/>
<path d="M13 14l6 1-1 5-5.500-.5z" fill="#5fb83a"/>
<path d="M5 20l2-6 3 6.500z" fill="#4a90d8"/>
</svg>
<svg class="abs" style="left:12px;top:104px" width="24" height="24" viewBox="0 0 24 24">
<ellipse cx="12" cy="21.500" rx="8" ry="1.300" fill="#cfcdca"/>
<path d="M6 3l15 3-3 13-15-3z" fill="#8fd04a" stroke="#6aa82e" stroke-width=".6"/>
<path d="M3 5.500l16-1.500 1.500 12.500-16 1.500z" fill="#fdfdfd" stroke="#b9c2c9" stroke-width=".8"/>
<path d="M5 7l12.500-1.200 1 9-12.500 1.200z" fill="#7fc0f0"/>
<path d="M6 15.800l3.500-5 3 3 2.500-2 3.300 3z" fill="#2d5f9a"/>
<path d="M6 15.900l12.300-1.200.2 1.100-12.400 1.200z" fill="#4a9a3a"/>
</svg>
<svg class="abs" style="left:13px;top:137px" width="22" height="23" viewBox="0 0 22 23">
<ellipse cx="11" cy="21.500" rx="7" ry="1.200" fill="#d5d3d0"/>
<circle cx="11" cy="11" r="9.300" fill="#fff" stroke="#e59a1f" stroke-width="2.200"/>
<circle cx="11" cy="11" r="10.300" fill="none" stroke="#b8720a" stroke-width=".6"/>
<path d="M15.500 5.500l-3.200 7-3-2.600z" fill="#e23b2e"/>
<path d="M5.500 17.500l3.800-7.600 3 2.600z" fill="#3f7fd6"/>
<text x="11" y="7.800" font-family="DejaVu Sans,sans-serif" font-weight="bold" font-size="5.500" fill="#1f3f8a" text-anchor="middle">N</text>
</svg>
</div>
<div id="status" class="abs" style="left:0;top:678px;width:933px;height:22px;background:#edeceb;">
<span class="st" style="left:9px">Page 1 / 1</span>
<span class="st" style="left:126px">Default</span>
<span class="st" style="left:264px">English (USA)</span>
<span class="st" style="left:383px">INSRT</span>
<span class="st" style="left:431px">STD</span>
<div class="ssep" style="left:120px"></div>
<div class="ssep" style="left:231px"></div>
<div class="ssep" style="left:378px"></div>
<div class="ssep" style="left:425px"></div>
<div class="ssep" style="left:461px"></div>
<div class="ssep" style="left:478px"></div>
<div class="ssep" style="left:505px"></div>
<div class="ssep" style="left:688px"></div>
<div class="ssep" style="left:757px"></div>
<div class="ssep" style="left:886px"></div>
<svg class="abs" style="left:695px;top:5px" width="54" height="14" viewBox="0 0 54 14">
<path d="M1.500 2.500h4l2 2v7h-6z" fill="#fff" stroke="#8a97a6"/>
<path d="M14.500 1.500h6.500v10h-6.500zM23 1.500h6.500v10h-6.500z" fill="#dbe6f3" stroke="#4f6f96"/>
<path d="M38.500 3.500h6.500v8h-6.500zM45 3.500h6.500v8h-6.500z" fill="#f5f5f5" stroke="#8a97a6"/><path d="M45 2v10" stroke="#6a7684"/>
</svg>
<svg class="abs" style="left:760px;top:3px" width="124" height="18" viewBox="0 0 124 18">
<path d="M17 9.500h90" stroke="#8a8886" stroke-width="1"/><path d="M33.500 6v7" stroke="#8a8886"/>
<circle cx="7.500" cy="9.500" r="4.800" fill="#eef1f5" stroke="#5f7088" stroke-width="1.200"/><path d="M5 9.500h5" stroke="#2b3f5c" stroke-width="1.400"/>
<circle cx="114.500" cy="9.500" r="4.800" fill="#eef1f5" stroke="#4f74ad" stroke-width="1.200"/><path d="M112 9.500h5M114.500 7v5" stroke="#2b4f8c" stroke-width="1.400"/>
<circle cx="60.500" cy="9.500" r="3.100" fill="#5f83b0" stroke="#3a5f8f" stroke-width="1"/>
</svg>
<span class="st" style="left:891px;word-spacing:-2px">105 %</span>
</div>
<!-- text frame -->
<div class="abs" style="left:131px;top:142px;width:620px;height:529px;border:1px solid #c4c4c4;border-bottom:none;clip-path:inset(0 0 8px 0);"></div>
<div id="doctext" class="doc">
<div class="line" style="top:141px;font-size:18.7px;font-weight:bold;line-height:24px;color:#000;">Sprite animation for character</div>
<div class="abs" style="left:396px;top:143px;width:1.200px;height:20px;background:#000;"></div>
<div class="line" style="top:185px;">Please redraw existing character (change the head) for 2D mobile game and animate his</div>
<div class="line" style="top:204px;">movements.</div>
<div class="line" style="top:243px;">5 facing direction (down, right, down-right, up, up-right)</div>
<div class="line" style="top:262px;">8 frames of animation for each facing direction</div>
<div class="line" style="top:281px;">Animation speed - 16 frames per second</div>
<div class="line" style="top:301px;">Separate face animations for 3 directions (right, down, down-right)</div>
<div class="line" style="top:320px;">Animation of character spinning (6 frames for 180 degrees spin and 4 frames for getting up on</div>
<div class="line" style="top:339px;">his legs)</div>
<div class="line" style="top:358.5px;">Grayscale masks for coloring character in certain parts (for each frame)</div>
<div class="line" style="top:378px;">Coordinates for positioning face and hat.</div>
<div class="bul" style="top:250px"></div>
<div class="bul" style="top:269px"></div>
<div class="bul" style="top:288px"></div>
<div class="bul" style="top:307px"></div>
<div class="bul" style="top:327px"></div>
<div class="bul" style="top:365.5px"></div>
<div class="bul" style="top:384.5px"></div>
</div>
<!-- keyboard button -->
<div class="abs" style="left:403px;top:140px;width:39px;height:34px;background:#5e5e5e;border-radius:5px;box-shadow:0 1px 6px rgba(0,0,0,.35);"></div>
<svg class="abs" style="left:403px;top:140px" width="39" height="34" viewBox="0 0 39 34"><rect x="7.700" y="7.500" width="23.500" height="18.500" rx="2" fill="none" stroke="#fff" stroke-width="1.600"/><g fill="#fff"><rect x="11.500" y="10.800" width="2.600" height="2.400"/><rect x="16.100" y="10.800" width="2.600" height="2.400"/><rect x="20.700" y="10.800" width="2.600" height="2.400"/><rect x="25.300" y="10.800" width="2.600" height="2.400"/><rect x="14.300" y="15.500" width="2.600" height="2.400"/><rect x="18.900" y="15.500" width="2.600" height="2.400"/><rect x="23.400" y="15.500" width="2.600" height="2.400"/><rect x="11.500" y="20.200" width="3.400" height="2.400"/><rect x="17" y="20.200" width="5.600" height="2.400"/><rect x="24.500" y="20.200" width="3.400" height="2.400"/></g></svg>
<!-- character illustration -->
<svg class="abs" style="left:333px;top:427px" width="215" height="215" viewBox="-1 0 215 215">
<defs><filter id="sf" x="-5%" y="-5%" width="110%" height="110%"><feGaussianBlur stdDeviation="0.5"/></filter><pattern id="stp" width="3" height="3" patternUnits="userSpaceOnUse"><circle cx=".8" cy=".8" r=".5" fill="#bfae58"/><circle cx="2.300" cy="2.200" r=".4" fill="#cdbd68"/></pattern><pattern id="stb" width="3.500" height="3" patternUnits="userSpaceOnUse"><circle cx=".8" cy=".8" r=".55" fill="#8a4e2c"/><circle cx="2.500" cy="2.200" r=".45" fill="#9a5a36"/></pattern></defs>
<rect x="-1" width="215" height="215" fill="#f1f1f1"/><rect x="-1" width="2" height="215" fill="#eaeaea"/>
<rect x="150" y="0" width="64" height="215" fill="#f4f4f4"/>
<g stroke="#c2c2c2" stroke-width="1.200" fill="none" filter="url(#sf)"><path d="M10 52l23-22M12 56l14-14M184 54l23-23M187 58l14-14M16 108l18-19M188 105l19-19M23 214l11-10M197 214l11-10"/><path d="M1 106q5-8 4 2t6-6 1 10 6-4-3 12M2 120q6 4 12 0M3 112l8 6" stroke="#c4c4c4"/></g>
<g filter="url(#sf)" stroke="#1e1208" stroke-width="1.900" stroke-linejoin="round" stroke-linecap="round">
<path d="M179.5 112.6C181.0 109.0 182.2 110.0 184.0 109.5C185.8 109.0 187.4 107.8 190.0 109.5C192.6 111.2 196.9 115.1 199.5 120.0C202.1 124.9 204.4 133.1 205.7 138.8C206.9 144.5 207.5 148.3 207.0 154.0C206.5 159.7 204.9 167.9 202.6 172.8C200.3 177.7 196.7 181.5 193.3 183.5C190.0 185.5 185.2 186.0 182.5 185.0C179.8 184.0 178.0 180.5 177.0 177.4C176.0 174.3 177.0 171.8 176.4 166.6C175.8 161.4 173.6 152.4 173.3 146.5C173.0 140.6 173.8 136.7 174.8 131.0C175.8 125.3 178.0 116.2 179.5 112.6z" fill="#f6eaa0"/>
<path d="M176 130q-2 20 1 40l4 12q8 3 14-1-8-2-11-12-3-20 0-44z" fill="url(#stp)" stroke="none" opacity=".8"/>
<path d="M200 124q6 16 5 32-2 14-8 22" fill="none" stroke="#cfc27a" stroke-width="2" opacity=".7"/>
<path d="M182 118q-4 16-1.500 32 1.500 14-1.500 28M196 176q-8 5-14 2" fill="none" stroke="#cfc27a" stroke-width="1"/>
<path d="M33.0 128.0C35.7 122.3 42.2 118.8 46.0 115.7C49.8 112.6 52.9 108.2 55.5 109.5C58.1 110.8 60.5 118.5 61.7 123.4C63.0 128.3 62.6 134.1 63.0 139.0C63.4 143.9 64.7 149.2 64.0 152.7C63.3 156.2 61.8 157.9 58.6 160.0C55.4 162.1 49.8 166.7 45.0 165.0C40.2 163.3 32.0 156.2 30.0 150.0C28.0 143.8 30.3 133.7 33.0 128.0z" fill="#f6eaa0"/>
<path d="M58.0 112.0L62.0 140.0L61.7 166.6L80.0 171.0L107.0 172.8L140.0 170.0L174.8 165.0L175.0 140.0L180.0 112.0L120.0 100.0z" fill="#f6eaa0" stroke="none"/>
<g stroke="#d8cb80" stroke-width=".8" fill="none"><path d="M66 150l6 6M70 146l8 9M76 150l8 8M84 152l8 8M92 158l8 7M100 162l8 5M112 166l10-2M124 163l10-3M136 158l10-4M148 152l10-5M160 146l8-5M64 140l4 6M168 136l4-6"/></g>
<path d="M62 150q20 14 46 16 30 0 66-10l1 9q-34 8-68 7.500-26-1-45-6.500z" fill="url(#stp)" stroke="none" opacity=".8"/>
<path d="M62 124q6 14 20 24 14 10 26 17l6-1q14-6 30-12 14-6 18-14 8-8 12-20l2 14q-6 12-16 18-20 10-46 18-30-8-50-30z" fill="url(#stp)" stroke="none" opacity=".7"/>
<path d="M61.7 166.6C64.0 165.5 74.7 170.3 80.0 171.0C85.3 171.7 100.0 172.9 107.0 172.8C114.0 172.7 132.1 170.9 140.0 170.0C147.9 169.1 170.6 163.8 174.8 165.0C179.0 166.2 175.4 175.9 175.6 180.0C175.8 184.1 178.8 197.8 176.4 200.5C174.0 203.2 160.0 202.6 155.0 203.0C150.0 203.4 135.7 205.3 133.2 203.6C130.7 201.9 134.7 189.8 133.2 188.2C131.7 186.6 123.1 189.3 120.0 189.5C116.9 189.7 109.1 189.5 107.0 189.7C104.9 189.9 102.6 189.2 102.0 191.0C101.4 192.8 104.3 203.5 101.7 205.0C99.1 206.5 85.0 205.1 80.0 204.0C75.0 202.9 61.1 197.6 58.6 196.0C56.1 194.4 58.4 191.9 58.6 190.0C58.8 188.1 59.6 182.7 60.0 180.0C60.4 177.3 59.4 167.7 61.7 166.6z" fill="#6b5511"/>
<path d="M96 176q12 10 26 12l12-1q10-4 18-12-12 6-28 7-16 0-28-6zM134 190l4 12 10 1q-8-6-8-14zM100 192l-4 10-8 0q8-4 8-12z" fill="#3f3006" stroke="none" opacity=".55"/>
<path d="M66 173q20 6 40 5.500M140 176q16-2 32-5M68 188l30 5M138 194l34 0M110 178q12 6 24 2" fill="none" stroke="#4f3e08" stroke-width="1.200"/>
<g fill="#f5e796"><ellipse cx="63.500" cy="201.500" rx="6.700" ry="5.700"/><ellipse cx="76" cy="204.500" rx="8" ry="7"/><ellipse cx="91.500" cy="204.800" rx="8.500" ry="6.600"/>
<ellipse cx="140.200" cy="207" rx="7.700" ry="5.800"/><ellipse cx="156" cy="206" rx="8" ry="7"/><ellipse cx="169.800" cy="204.800" rx="6.600" ry="5.800"/></g>
<circle cx="29.700" cy="157.700" r="27.300" fill="#1b1430"/>
<path d="M13 137q2-6 8-5l2 4z" fill="#1b1430"/>
<g fill="#f3e58c"><ellipse cx="15.400" cy="173" rx="5.200" ry="8" transform="rotate(22 15.400 173)"/><ellipse cx="30" cy="178" rx="4.800" ry="8.500" transform="rotate(5 30 178)"/><ellipse cx="44.700" cy="172.500" rx="4.800" ry="8" transform="rotate(-15 44.700 172.500)"/></g>
<path d="M40 71q3-3 6-2.400l6.500 4 1.500 13.400-1 9.600-5.200-4.600-5.400-9.300z" fill="#ee9850"/>
<path d="M40.500 71q3-2.500 5.500-2l5.500 3.200-6.500 2.300z" fill="#f8eca4" stroke="none"/>
<path d="M185.500 72.500q3-2 6.300-1.500l3.800 4.500-2.300 10.800-6.300 7.700-2.100-7.700z" fill="#ee9850"/>
<path d="M107.1 5.3L108.2 4.6L109.2 4.3L109.9 4.7L110.5 5.2L110.7 5.8L110.9 6.2L111.0 6.6L111.1 7.3L111.6 7.9L111.9 8.8L112.6 8.8L113.3 8.6L113.9 8.4L114.5 8.0L115.2 7.6L115.9 7.8L116.7 7.4L117.5 7.7L118.5 8.1L119.4 8.2L120.1 7.6L120.6 6.7L121.3 6.0L122.1 5.5L122.7 5.1L123.6 5.1L124.3 4.8L125.0 4.7L125.8 4.7L126.0 3.9L126.3 3.3L126.8 2.6L127.4 2.0L128.1 1.8L128.7 1.8L129.3 1.5L130.0 1.8L130.6 2.2L131.2 2.7L131.8 3.6L132.8 2.9L133.7 2.5L134.6 2.4L135.5 2.3L136.2 2.6L136.9 3.2L137.4 4.1L137.7 5.0L138.1 5.7L138.9 5.6L139.6 5.9L140.2 6.1L140.8 6.5L141.0 7.0L141.4 7.4L141.4 8.2L141.7 8.8L141.9 9.5L141.8 10.2L141.9 10.9L142.3 11.3L143.0 11.5L143.7 11.7L144.4 11.9L145.0 12.1L145.5 12.3L146.0 12.5L146.3 13.0L146.6 13.5L147.0 13.9L147.4 14.4L147.8 15.0L148.3 15.3L149.0 15.2L149.6 15.0L150.1 15.0L150.5 15.0L150.8 14.8L151.0 14.5L151.2 14.5L151.5 14.5L151.8 14.2L152.5 14.0L153.1 13.6L154.0 13.2L154.0 12.5L153.7 11.6L153.7 10.8L153.7 10.1L153.6 9.4L154.3 9.1L154.3 8.4L154.7 8.0L155.2 7.7L155.8 7.6L156.3 7.7L156.7 7.9L156.9 8.1L157.1 8.4L157.4 8.3L157.7 8.5L158.3 8.4L158.8 8.5L159.4 8.6L159.8 8.9L160.2 9.2L160.5 9.6L160.8 9.9L161.0 10.3L161.1 10.8L161.0 11.5L161.0 12.3L160.9 13.2L161.3 13.9L162.0 14.3L162.9 14.8L163.6 15.3L164.1 16.0L164.4 16.8L164.3 17.8L164.2 18.9L163.9 19.9L164.9 20.3L165.6 20.8L166.1 21.3L166.9 21.5L167.1 22.0L167.4 22.5L167.8 22.8L168.0 23.2L168.4 23.6L168.8 23.8L169.2 24.2L169.5 24.4L169.9 24.4L170.4 24.3L171.0 24.2L171.5 24.1L172.0 24.1L172.3 24.4L172.8 24.5L173.2 24.8L173.5 25.3L173.8 25.9L174.2 26.4L174.1 27.2L174.0 28.0L173.7 28.8L174.3 29.2L175.1 29.6L175.6 30.2L176.1 30.8L176.7 31.4L176.5 32.2L176.7 32.8L176.4 33.4L176.1 33.9L175.9 34.5L175.4 35.2L175.6 35.9L176.4 36.1L177.0 36.3L177.5 36.3L177.9 36.4L178.4 36.4L178.8 36.7L179.3 36.9L179.5 37.6L179.9 38.0L180.2 38.4L180.2 39.0L180.1 39.6L180.0 40.2L180.0 40.7L180.0 41.3L180.9 41.7L181.5 42.2L182.0 42.7L182.3 43.3L183.0 43.9L182.6 44.7L182.8 45.4L182.4 46.2L181.9 47.1L182.1 47.8L182.5 48.5L183.0 49.2L183.2 49.8L183.3 50.4L183.2 51.0L183.2 51.6L182.9 52.3L182.8 53.1L182.5 53.8L182.4 54.5L182.9 54.9L183.3 55.3L183.9 55.7L184.4 56.2L184.7 56.9L185.2 57.6L185.1 58.3L184.5 58.9L184.3 59.4L184.0 59.9L183.5 60.5L183.0 61.1L183.5 61.8L184.1 62.3L184.7 62.7L185.2 63.0L185.7 63.4L185.8 64.0L186.3 64.4L186.3 65.1L186.1 65.9L185.8 66.6L185.5 67.3L184.9 67.8L185.4 68.4L185.7 68.9L186.1 69.6L186.2 70.3L186.6 71.1L186.4 71.9L186.2 72.7L185.6 73.3L185.0 73.9L184.4 74.5L184.1 75.2L184.7 76.2L185.2 77.1L185.4 78.0L185.0 78.7L185.0 79.4L184.5 80.0L184.1 80.7L183.7 81.4L183.2 82.1L183.9 83.0L184.5 83.9L184.7 84.6L184.9 85.3L185.0 85.9L184.6 86.6L184.3 87.3L183.8 88.1L183.4 89.0L183.9 89.9L184.5 90.8L184.8 91.6L185.2 92.3L184.8 93.1L184.5 93.9L184.1 94.7L183.3 95.6L183.6 96.4L183.9 97.1L184.1 97.7L184.3 98.3L184.8 98.9L184.3 99.5L184.3 100.2L184.1 101.1L183.4 101.9L182.9 102.6L182.8 103.3L183.2 104.0L183.7 104.8L183.7 105.8L183.9 107.0L182.9 108.1L181.4 109.2L181.5 110.7L181.7 112.4L181.3 113.8L180.3 115.1L178.9 116.3L179.2 118.4L178.6 120.2L177.3 121.8L176.1 123.3L176.6 125.3L176.3 127.0L174.9 128.3L173.4 129.4L173.3 131.4L172.5 133.4L170.2 134.0L168.6 135.0L167.4 136.7L165.8 137.5L163.8 137.4L162.3 138.4L161.3 140.0L159.9 141.0L158.1 141.3L157.0 142.2L157.1 143.5L157.0 144.6L156.6 145.6L155.7 146.4L154.3 147.0L152.7 147.5L151.7 149.5L150.0 150.5L147.8 150.2L146.1 151.0L144.4 152.5L142.3 152.7L139.9 152.7L138.1 154.7L135.8 155.3L133.3 155.1L131.8 157.1L129.9 157.9L127.6 157.6L126.1 159.0L124.6 160.5L122.5 160.6L120.5 160.8L119.5 162.3L118.4 163.2L117.4 163.9L116.1 163.9L114.9 163.9L114.0 164.4L113.1 165.4L112.2 166.2L111.4 166.2L110.7 166.4L110.0 165.8L109.5 165.5L109.0 164.8L108.4 164.0L107.0 164.0L105.5 163.9L104.0 163.7L103.0 162.5L102.4 160.6L100.4 160.7L98.7 160.2L97.2 158.9L96.1 156.6L93.4 156.5L91.6 155.4L90.8 153.1L88.6 152.6L86.8 151.4L85.6 149.4L83.6 148.2L81.1 147.3L79.9 144.6L77.5 144.0L75.3 143.2L74.2 141.1L72.5 139.9L70.3 139.4L69.1 137.6L68.3 135.3L65.8 134.5L64.9 132.8L64.7 131.0L64.6 129.4L62.9 128.4L62.1 127.0L62.1 125.2L62.6 123.0L60.5 121.9L59.5 120.4L59.4 118.7L59.7 116.9L58.4 115.8L57.2 114.8L56.8 113.5L56.7 112.1L56.9 110.8L56.8 110.0L56.2 109.8L55.8 109.7L55.5 109.5L54.9 109.1L54.5 108.3L54.2 107.1L54.5 105.5L55.3 103.7L54.1 102.0L53.4 100.1L54.0 98.2L54.6 96.2L53.4 94.4L53.1 92.5L54.1 90.9L54.7 89.6L54.1 88.4L53.8 87.4L53.8 86.4L53.9 85.4L54.4 84.4L55.6 83.0L54.6 81.5L53.8 80.2L53.4 78.9L53.9 77.5L54.3 76.2L54.0 74.9L52.7 73.9L52.3 72.7L51.8 71.7L51.9 70.5L51.8 69.3L51.2 68.6L50.1 68.4L49.3 68.0L48.6 67.3L48.3 66.3L48.6 65.3L49.3 64.6L50.2 64.4L51.2 64.5L51.9 64.1L52.0 63.1L52.0 62.3L51.8 61.7L51.4 61.2L51.1 60.7L51.2 59.8L50.9 59.0L51.0 57.9L50.6 57.1L49.6 56.6L48.8 55.7L48.0 54.6L48.3 53.4L48.4 52.3L49.2 51.1L48.6 50.1L47.9 49.1L47.4 47.9L47.5 46.7L48.6 45.9L49.4 45.4L50.5 45.3L51.1 44.8L51.3 43.8L51.6 42.9L51.6 41.9L52.0 41.2L52.9 40.5L53.7 39.5L54.0 38.3L53.2 37.2L52.6 36.1L52.6 35.0L52.7 33.7L53.9 33.0L55.1 32.6L55.6 31.8L56.3 30.7L57.2 30.1L58.1 29.7L59.2 29.6L60.4 29.5L61.4 28.8L61.5 27.5L61.2 26.3L61.3 25.3L61.3 24.2L62.0 23.1L63.1 22.2L62.7 21.1L62.6 19.8L62.9 18.6L63.7 17.9L64.5 17.4L65.5 17.3L66.6 17.4L67.5 17.0L68.1 15.6L68.9 14.4L70.3 14.1L71.8 14.1L73.4 14.7L74.2 13.3L75.3 12.2L76.6 11.7L78.3 11.8L80.1 12.2L81.5 10.7L83.0 10.2L84.5 10.0L86.0 10.8L87.5 10.8L88.8 9.4L90.4 8.7L92.5 9.3L94.6 8.9L96.2 7.2L98.3 6.9L100.7 7.3L102.0 5.4L103.7 4.4L105.5 4.7z" fill="#c78659"/>
<g fill="#b5734a" stroke="none"><path d="M68 27q4-6 11-5l-5 6zM150 22q6 2 9 8l-8-2zM59 110q2 8 8 14l-3-12zM120 152q10-2 18-7l-10 9zM174 60q4 8 3 18l-4-10zM95 13q8-3 14 0l-8 2zM160 120q6-6 8-14l2 8zM60 60q-2 10 0 20l3-10z"/><circle cx="84" cy="140" r="2"/><circle cx="150" cy="142" r="2"/><circle cx="100" cy="152" r="1.500"/><circle cx="130" cy="146" r="1.500"/></g>
<path d="M58 108q4 14 12 24 12 10 26 20l12 8 8-2 20-8 16-8 12-12 10-16 4-10-6-2-8 16-10 12-14 4-16 8-14 4-14-6-16-14-10-12-6-12z" fill="url(#stb)" stroke="none" opacity=".55"/>
<path d="M56 50q-4 20-1 50l4 0q-2-26 2-48zM178 40q6 20 4 56l-4 0q2-30-4-54zM70 18q14-8 36-10l0 4q-20 2-34 10zM120 6q20 0 36 8l-2 3q-16-7-34-7z" fill="url(#stb)" stroke="none" opacity=".45"/>
<g fill="none" stroke="#ae6c44" stroke-width="2.500" opacity=".7"><path d="M60 112q4 12 10 20 10 10 24 20M180 112q-4 12-9 19-8 6-14 10M58 70q-2 12 0 30M180 50q3 20 1 44"/></g>
<g stroke="#8f5432" stroke-width=".7" fill="none" opacity=".7"><path d="M70 128l5 4M76 134l6 4M84 141l6 4M92 147l6 4M100 152l6 3M112 158l8-2M124 154l8-3M136 150l8-3M150 144l6-4M160 136l6-5M168 128l4-6M62 118l4 6M56 60l3 2M55 80l3 1M56 95l3 0M176 45l3 2M180 62l2 1M180 80l2 0M100 10l4 2M120 8l4 1M140 12l4 3M75 18l4 3M160 22l3 4"/></g>
<path d="M68.4 105.8L67.4 104.8L66.9 103.5L67.1 101.9L66.9 100.3L66.4 98.5L66.8 96.6L66.1 94.7L66.1 92.5L66.1 90.4L65.1 88.5L65.8 86.5L64.8 84.7L64.6 82.9L65.2 80.9L64.4 79.0L64.8 77.0L64.7 75.0L64.7 73.3L65.6 71.8L65.7 70.4L65.8 68.9L66.4 67.6L67.5 66.4L67.4 64.5L68.3 63.1L69.6 62.2L69.6 60.7L70.0 59.4L71.0 58.6L72.4 58.1L72.6 56.4L73.7 55.2L75.5 54.6L76.1 53.0L77.0 51.7L78.6 51.3L79.7 50.3L80.6 49.1L81.8 48.4L83.4 48.3L83.9 46.9L84.5 45.9L85.4 45.5L86.2 45.2L87.0 45.2L87.5 44.8L88.0 44.4L88.8 44.3L89.7 44.6L90.2 45.4L90.2 46.4L90.0 47.5L91.1 48.2L91.8 48.9L92.1 49.9L92.5 50.9L92.9 52.0L94.0 52.1L94.9 52.4L95.6 52.8L96.1 53.5L96.7 54.3L97.6 54.6L98.8 54.4L99.8 54.6L100.9 54.9L101.8 55.7L102.9 55.3L103.8 54.8L104.8 54.7L105.9 54.8L107.2 54.9L107.9 53.9L108.5 53.1L109.4 52.8L110.1 52.3L111.1 51.9L111.5 50.9L111.9 49.8L112.6 48.7L114.0 48.1L114.4 46.8L114.4 45.4L115.2 44.4L116.2 43.4L116.5 42.2L116.9 40.9L117.8 39.9L119.1 39.3L119.4 38.1L119.9 37.2L120.6 36.5L121.3 36.0L122.3 35.9L123.1 35.4L123.8 34.3L124.8 33.8L125.9 33.7L127.0 33.9L127.8 33.2L128.7 32.6L129.7 32.4L130.7 32.7L131.7 33.4L132.7 33.2L133.6 33.0L134.5 33.0L135.1 33.5L135.7 34.1L136.1 35.1L137.1 35.4L138.3 35.7L139.1 36.6L139.6 37.7L140.0 38.8L141.1 39.5L142.0 40.2L142.4 41.3L142.8 42.5L144.1 42.9L145.2 43.1L146.0 43.3L146.8 43.8L147.7 44.3L148.6 43.8L149.6 43.6L150.7 43.8L151.7 44.7L152.6 45.7L154.0 46.0L155.1 46.7L155.6 48.0L156.5 49.0L157.8 49.8L158.6 51.0L159.1 52.7L160.7 53.4L161.6 54.5L162.0 55.9L162.8 57.0L163.8 57.8L164.6 59.0L164.6 60.6L165.8 61.6L166.6 62.8L166.9 64.2L166.9 65.4L167.7 66.3L168.3 67.3L168.5 68.4L168.2 69.8L168.8 71.0L169.4 72.2L169.5 73.3L169.1 74.3L169.1 75.3L169.6 76.2L169.9 77.3L169.7 78.5L168.9 80.0L169.7 81.6L169.5 83.1L168.9 84.5L169.0 85.9L169.1 87.4L168.5 89.0L168.2 90.6L168.4 92.5L167.6 94.4L168.1 96.4L167.9 98.3L167.0 100.0L167.6 101.8L167.2 103.3L166.3 104.6L166.7 106.1L166.4 107.1L165.8 107.6L165.2 107.7L164.8 107.4L164.4 107.1L163.8 106.7L163.1 107.1L162.6 108.1L162.2 109.4L160.9 110.3L160.0 111.7L159.6 113.5L158.3 114.7L157.6 116.2L157.1 117.7L156.2 118.8L155.0 119.3L154.8 120.0L154.7 120.5L154.5 120.8L154.4 121.0L154.2 121.3L153.9 121.7L153.5 122.4L152.7 123.1L152.2 124.1L152.3 125.3L152.2 126.6L151.4 127.5L150.5 128.4L150.7 129.8L150.3 131.0L149.4 131.7L148.5 132.2L147.8 132.6L147.5 133.4L147.0 134.0L146.5 134.6L145.6 134.8L144.5 134.9L143.5 135.2L142.9 136.2L142.0 136.7L141.0 136.9L140.0 136.8L139.1 136.8L138.4 137.3L137.7 137.5L137.0 137.4L136.5 137.1L136.2 136.5L136.5 136.0L136.5 135.5L136.8 135.0L136.8 134.3L136.2 134.0L135.5 134.0L134.9 134.0L134.4 134.0L134.0 133.6L133.4 133.4L132.8 133.0L132.0 132.4L130.9 132.5L129.6 132.7L128.5 132.5L127.4 131.7L126.1 131.5L124.8 131.7L123.5 131.4L122.1 130.6L120.6 131.0L119.0 131.1L117.8 130.3L116.5 129.9L115.2 130.3L114.0 130.2L112.8 129.7L111.6 129.3L110.3 129.8L109.0 129.7L107.9 129.1L106.9 128.6L105.9 129.0L105.0 129.2L104.3 129.3L103.5 129.1L102.6 128.9L101.8 129.1L101.4 129.7L101.3 130.3L101.3 130.9L100.9 131.4L100.6 132.0L99.9 132.3L99.1 132.3L98.4 132.5L97.8 133.0L97.1 133.5L96.4 133.6L95.6 133.6L94.8 133.2L94.1 132.7L93.2 132.8L92.4 133.1L91.7 133.1L91.0 133.1L90.4 132.9L89.8 132.4L89.5 131.7L88.8 131.3L87.7 130.9L86.9 130.1L86.7 128.8L86.9 127.4L85.9 126.4L85.1 125.3L85.0 123.9L84.8 122.4L83.3 121.6L82.5 120.5L82.0 119.0L80.7 118.5L79.6 117.9L78.6 117.2L78.0 116.0L76.8 115.4L75.6 114.8L75.1 113.6L74.9 112.4L74.5 111.6L73.7 110.9L73.4 110.2L73.1 109.5L72.8 108.8L72.6 107.9L72.1 107.2L71.3 107.5L70.7 107.8L70.2 108.1L69.5 108.1L68.8 107.8L68.4 107.0z" fill="#f8ec9e" stroke-width="1.600"/>
<g stroke="#d9cc78" stroke-width=".8" fill="none"><path d="M68 70l3 2M67 80l3 1M68 90l3 0M69 100l3-1M164 66l-3 2M166 76l-3 1M166 88l-3 0M165 98l-3-1M76 112l3-2M156 112l-3-2"/></g>
<path d="M90 47q2 5 8 7 6 2 10-1 4-4 6-10" fill="none" stroke="#a9673f" stroke-width="2.200" opacity=".6" transform="translate(0 -2.500)"/>
<path d="M81.700 67.800q5-5 12-5.500 7-1.500 13.300-0.600l-1 4q-8 0-14 1.500-6 1.500-10.300 4.600z" fill="#c58458" stroke="#a86a42" stroke-width=".6"/>
<path d="M127 63q4-3 9-3 4-1.500 8-0.500 6 2 10.800 6.300l-1.800 3.500q-5-4-11-4.500-7-0.500-14 2.700z" fill="#c58458" stroke="#a86a42" stroke-width=".6"/>
<circle cx="94" cy="91" r="16.500" fill="#f6f6fa" stroke="#141414" stroke-width="2.600"/>
<circle cx="138.600" cy="91" r="16" fill="#f6f6fa" stroke="#141414" stroke-width="2.600"/>
<path d="M79.500 92q2 13 15 14M124.500 92q2 13 14.500 14" fill="none" stroke="#c4c9cd" stroke-width="2.500"/>
<circle cx="96" cy="94.500" r="7" fill="#2c5888" stroke="#14263f" stroke-width="1.300"/>
<circle cx="138.600" cy="95" r="7" fill="#2c5888" stroke="#14263f" stroke-width="1.300"/>
<circle cx="96" cy="94.500" r="3.300" fill="#0b1220" stroke="none"/>
<circle cx="138.600" cy="95" r="3.300" fill="#0b1220" stroke="none"/>
<path d="M112 106.300q0-3.500 4.300-3.800t4.500 3.300" fill="none" stroke-width="1.100"/><circle cx="114.800" cy="105.800" r=".7" fill="#1e1208" stroke="none"/><circle cx="118.300" cy="105.800" r=".7" fill="#1e1208" stroke="none"/>
<path d="M91.400 115.300L92.300 121.300Q106 121.900 118.900 122.800Q129 121.500 139.200 118.300L137.300 114.700L136 117.700Q127 119.800 114.600 120.400Q102 119 93.200 115.700z" fill="#141414" stroke-width=".7"/>
</g>
</svg>
</body></html>
